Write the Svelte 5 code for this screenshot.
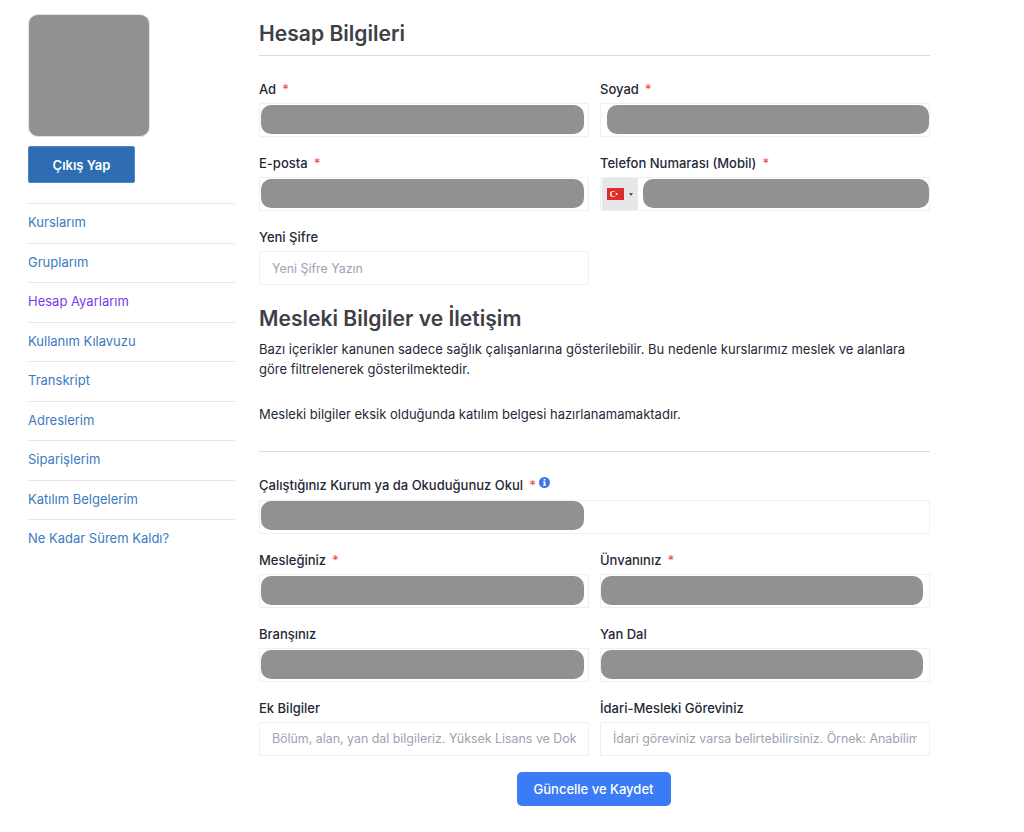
<script>
    const links = [
        "Kurslarım",
        "Gruplarım",
        "Hesap Ayarlarım",
        "Kullanım Kılavuzu",
        "Transkript",
        "Adreslerim",
        "Siparişlerim",
        "Katılım Belgelerim",
        "Ne Kadar Sürem Kaldı?",
    ];
</script>

{#snippet label(text, required)}
    <div class="label">{text}{#if required}<span class="star">*</span>{/if}</div>
{/snippet}

{#snippet masked(text, required, right = false, low = false)}
    <div class="field">
        {@render label(text, required)}
        <div class="box" class:right class:low><div class="mask"></div></div>
    </div>
{/snippet}

<div class="page">
    <aside class="sidebar">
        <div class="avatar"></div>
        <button class="logout">Çıkış Yap</button>
        <nav class="menu">
            {#each links as link}
                <a href="#top" class:active={link === "Hesap Ayarlarım"}>{link}</a>
            {/each}
        </nav>
    </aside>

    <main class="content">
        <h2 class="title">Hesap Bilgileri</h2>

        <div class="grid first">
            {@render masked("Ad", true)}
            <div class="field">
                {@render label("Soyad", true)}
                <div class="box wide"><div class="mask"></div></div>
            </div>
            {@render masked("E-posta", true)}
            <div class="field">
                {@render label("Telefon Numarası (Mobil)", true)}
                <div class="box phone">
                    <div class="country">
                        <svg width="17" height="12" viewBox="0 0 17 12">
                            <rect width="17" height="12" fill="#e02b27" />
                            <circle cx="6" cy="6" r="3" fill="#fff" />
                            <circle cx="6.8" cy="6" r="2.4" fill="#e02b27" />
                            <circle cx="9.6" cy="6" r="1" fill="#fff" />
                        </svg>
                        <span class="caret"></span>
                    </div>
                    <div class="mask"></div>
                </div>
            </div>
            <div class="field">
                {@render label("Yeni Şifre")}
                <input class="input" type="text" placeholder="Yeni Şifre Yazın" />
            </div>
        </div>

        <h2 class="subtitle">Mesleki Bilgiler ve İletişim</h2>
        <p class="info">
            Bazı içerikler kanunen sadece sağlık çalışanlarına gösterilebilir. Bu nedenle kurslarımız meslek ve alanlara göre filtrelenerek gösterilmektedir.
        </p>
        <p class="info second">Mesleki bilgiler eksik olduğunda katılım belgesi hazırlanamamaktadır.</p>
        <hr class="divider" />

        <div class="grid">
            <div class="field full">
                <div class="label tall">
                    Çalıştığınız Kurum ya da Okuduğunuz Okul<span class="star">*</span><svg class="info-icon" width="11" height="11" viewBox="0 0 11 11">
                        <circle cx="5.5" cy="5.5" r="5.5" fill="#3b76e8" />
                        <rect x="4.7" y="2" width="1.7" height="1.6" fill="#fff" />
                        <path d="M3.9 4.5h2.5v3.2h.8v1H3.9v-1h.8V5.5h-.8z" fill="#fff" />
                    </svg>
                </div>
                <div class="box"><div class="mask"></div></div>
            </div>
            {@render masked("Mesleğiniz", true, false, true)}
            {@render masked("Ünvanınız", true, true, true)}
            {@render masked("Branşınız", false, false, true)}
            {@render masked("Yan Dal", false, true, true)}
            <div class="field">
                {@render label("Ek Bilgiler")}
                <input class="input" type="text" placeholder="Bölüm, alan, yan dal bilgileriz. Yüksek Lisans ve Doktora" />
            </div>
            <div class="field">
                {@render label("İdari-Mesleki Göreviniz")}
                <input class="input" type="text" placeholder="İdari göreviniz varsa belirtebilirsiniz. Örnek: Anabilim Dalı Başkanı" />
            </div>
        </div>

        <div class="actions">
            <button class="save">Güncelle ve Kaydet</button>
        </div>
    </main>
</div>

<style>
    :global(body) {
        margin: 0;
        background: #fff;
    }

    .page {
        display: flex;
        width: 1024px;
        height: 832px;
        overflow: hidden;
        box-sizing: border-box;
        padding: 14px 94px 0 28px;
        gap: 24px;
        font-family: Inter, "Liberation Sans", sans-serif;
        font-size: 13px;
        color: #1f2937;
    }

    .sidebar {
        width: 207px;
        flex-shrink: 0;
    }

    .avatar {
        width: 122px;
        height: 123px;
        background: #919191;
        border: 1px solid #e2e2e2;
        border-radius: 10px;
        box-sizing: border-box;
    }

    .logout {
        display: block;
        width: 107px;
        height: 37px;
        margin-top: 9px;
        background: #2e6db4;
        border: 1px solid #4a86c8;
        border-radius: 2px;
        color: #fff;
        font: 600 13px Inter, "Liberation Sans", sans-serif;
    }

    .menu {
        display: flex;
        flex-direction: column;
        margin-top: 20px;
    }

    .menu a {
        height: 39.5px;
        box-sizing: border-box;
        border-top: 1px solid #e5e7eb;
        padding-top: 10px;
        line-height: 16px;
        color: #3b7bbf;
        text-decoration: none;
    }

    .menu a.active {
        color: #7c3aed;
    }

    .content {
        width: 671px;
    }

    .title {
        margin: 0;
        height: 42px;
        box-sizing: border-box;
        padding-top: 7px;
        border-bottom: 1px solid #d9dcdf;
        font-size: 21.1px;
        line-height: 26px;
        font-weight: 600;
        color: #3f3f46;
    }

    .grid {
        display: grid;
        grid-template-columns: 330px 330px;
        column-gap: 11px;
        row-gap: 17px;
    }

    .grid.first {
        margin-top: 24px;
    }

    .field {
        min-width: 0;
    }

    .full {
        grid-column: 1 / 3;
    }

    .label {
        height: 23px;
        line-height: 18px;
        font-weight: 500;
        font-size: 13px;
        color: #1f2937;
    }

    .label.tall {
        height: 25px;
        line-height: 20px;
    }

    .star {
        margin-left: 6px;
        color: #ef5350;
    }

    .info-icon {
        margin-left: 3px;
        vertical-align: 2px;
    }

    .box {
        display: flex;
        align-items: center;
        height: 34px;
        box-sizing: border-box;
        border: 1px solid #f0f0f0;
        padding: 0 0 2px 1px;
        overflow: hidden;
    }

    .box.right {
        padding-left: 0;
    }

    .box.low {
        padding-bottom: 0;
    }

    .mask {
        width: 323px;
        height: 29px;
        background: #919191;
        border-radius: 10px;
        flex-shrink: 0;
    }

    .box.right .mask {
        width: 322px;
    }

    .box.wide {
        padding-left: 6px;
    }

    .box.wide .mask {
        width: 322px;
    }

    .box.phone {
        padding-bottom: 0;
    }

    .phone .mask {
        width: 286px;
        margin: 0 0 2px 5px;
    }

    .country {
        display: flex;
        align-items: center;
        gap: 5px;
        width: 36px;
        height: 32px;
        box-sizing: border-box;
        padding-left: 5px;
        background: #e5e7e8;
        flex-shrink: 0;
    }

    .caret {
        width: 0;
        height: 0;
        border-left: 2px solid transparent;
        border-right: 2px solid transparent;
        border-top: 3px solid #555;
    }

    .input {
        display: block;
        width: 100%;
        height: 34px;
        box-sizing: border-box;
        border: 1px solid #f0f0f0;
        border-radius: 0;
        padding: 0 12px;
        font: 400 12.4px Inter, "Liberation Sans", sans-serif;
        outline: none;
    }

    .input::placeholder {
        color: #9ca3af;
        opacity: 1;
    }

    .subtitle {
        margin: 21px 0 0;
        font-size: 21.1px;
        line-height: 26px;
        font-weight: 600;
        color: #3f3f46;
    }

    .info {
        width: 660px;
        margin: 8px 0 0;
        line-height: 19.5px;
        color: #1f2937;
    }

    .info.second {
        margin-top: 26px;
    }

    .divider {
        margin: 26px 0 23px;
        border: 0;
        border-top: 1px solid #d9dcdf;
    }

    .actions {
        display: flex;
        justify-content: center;
        margin-top: 16px;
        padding-right: 2px;
    }

    .save {
        width: 154px;
        height: 34px;
        background: #3b7cf6;
        border: 0;
        border-radius: 5px;
        color: #fff;
        font: 500 13px Inter, "Liberation Sans", sans-serif;
    }
</style>
